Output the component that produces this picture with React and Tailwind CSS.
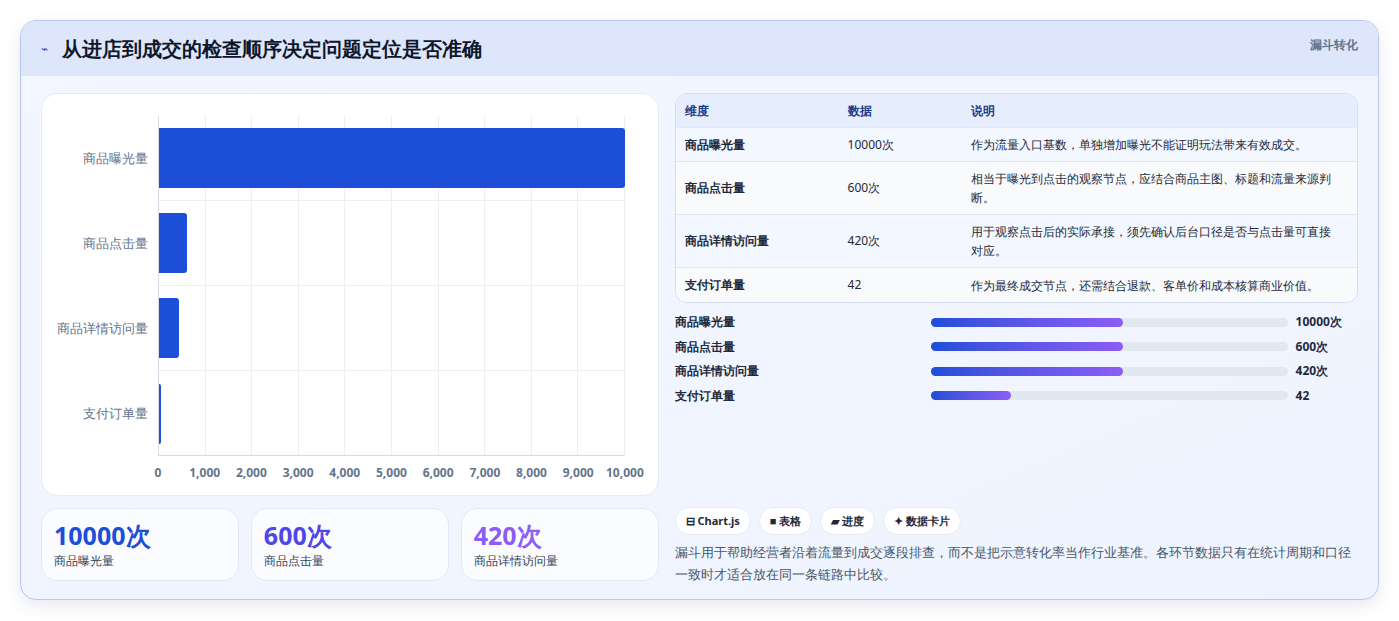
const rows = [
  { name: "商品曝光量", val: "10000次", desc: "作为流量入口基数，单独增加曝光不能证明玩法带来有效成交。", h: "h-[34px]" },
  { name: "商品点击量", val: "600次", desc: "相当于曝光到点击的观察节点，应结合商品主图、标题和流量来源判断。", h: "h-[53px]" },
  { name: "商品详情访问量", val: "420次", desc: "用于观察点击后的实际承接，须先确认后台口径是否与点击量可直接对应。", h: "h-[53px]" },
  { name: "支付订单量", val: "42", desc: "作为最终成交节点，还需结合退款、客单价和成本核算商业价值。", h: "h-[35px]" },
];

const bars = [
  { name: "商品曝光量", w: "w-[54%]", val: "10000次" },
  { name: "商品点击量", w: "w-[54%]", val: "600次" },
  { name: "商品详情访问量", w: "w-[54%]", val: "420次" },
  { name: "支付订单量", w: "w-[22.5%]", val: "42" },
];

const chart = [
  { name: "商品曝光量", w: "w-full" },
  { name: "商品点击量", w: "w-[28px]" },
  { name: "商品详情访问量", w: "w-[20px]" },
  { name: "支付订单量", w: "w-[2px]" },
];

const ticks = ["0", "1,000", "2,000", "3,000", "4,000", "5,000", "6,000", "7,000", "8,000", "9,000", "10,000"];

export default function App() {
  return (
    <div className="w-[1399px] h-[621px] bg-white p-5 font-['Noto_Sans_CJK_SC','Noto_Sans',sans-serif]">
      <div className="h-[580px] rounded-2xl border border-[#b9c6ee] overflow-hidden bg-gradient-to-br from-[#f3f6ff] to-[#eef4ff] shadow-[0_6px_16px_rgba(60,80,140,0.12)]">
        <div className="h-[55px] bg-[#dde6fb] flex items-center justify-between px-5">
          <div className="flex items-center gap-3.5">
            <span className="text-[#1d4ed8] text-xs">⌁</span>
            <h1 className="text-[20px] font-bold text-[#0f172a]">从进店到成交的检查顺序决定问题定位是否准确</h1>
          </div>
          <span className="text-xs font-bold text-[#64748b] self-start mt-4">漏斗转化</span>
        </div>
        <div className="flex gap-4 px-5 pt-[17px]">
          <div className="w-[619px] flex flex-col gap-3">
            <div className="h-[403px] bg-white rounded-2xl border border-[#e5eaf5] pt-[22px] px-3.5">
              <div className="flex">
                <div className="w-[102px] flex flex-col">
                  {chart.map((c) => (
                    <div key={c.name} className="h-[85px] flex items-center justify-end pr-2.5 text-[13px] text-[#64748b] whitespace-nowrap">{c.name}</div>
                  ))}
                </div>
                <div className="relative w-[467px] h-[340px] border-l border-b border-[#d8dce4]">
                  <div className="absolute inset-0 flex">
                    {ticks.slice(1).map((t) => (
                      <div key={t} className="flex-1 border-r border-[#eceef2]" />
                    ))}
                  </div>
                  {chart.map((c, i) => (
                    <div key={c.name} className={`relative h-[85px] flex items-center ${i < 3 ? "border-b border-[#eceef2]" : ""}`}>
                      <div className={`h-[60px] ${c.w} bg-[#1d4ed8] rounded-r-[3px]`} />
                    </div>
                  ))}
                </div>
              </div>
              <div className="ml-[102px] w-[467px] flex justify-between mt-[8px] text-[12px] font-bold text-[#64748b]">
                {ticks.map((t) => (
                  <span key={t} className="w-0 flex justify-center whitespace-nowrap">{t}</span>
                ))}
              </div>
            </div>
            <div className="grid grid-cols-3 gap-3">
              {[["10000次", "text-[#1d4ed8]", "商品曝光量"], ["600次", "text-[#4f46e5]", "商品点击量"], ["420次", "text-[#8b5cf6]", "商品详情访问量"]].map(([v, c, l]) => (
                <div key={l} className="h-[73px] bg-white/70 rounded-2xl border border-[#e2e8f5] px-3 pt-2">
                  <div className={`text-[25px] font-bold leading-[36px] ${c}`}>{v}</div>
                  <div className="text-xs text-[#334155]">{l}</div>
                </div>
              ))}
            </div>
          </div>
          <div className="w-[685px] flex flex-col">
            <div className="rounded-xl border border-[#d5ddee] overflow-hidden bg-white text-xs text-[#1e293b]">
              <div className="h-[33px] bg-[#e6eefd] flex items-center font-bold text-[#1e3a8a]">
                <span className="w-[172px] pl-[9px]">维度</span>
                <span className="w-[123px]">数据</span>
                <span>说明</span>
              </div>
              {rows.map((r, i) => (
                <div key={r.name} className={`${r.h} flex items-center border-t border-[#e3e8f2] ${i % 2 ? "bg-[#f8fafc]" : "bg-[#f3f7ff]"}`}>
                  <span className="w-[172px] pl-[9px] font-bold">{r.name}</span>
                  <span className="w-[123px]">{r.val}</span>
                  <span className="flex-1 pr-4 leading-[19px]">{r.desc}</span>
                </div>
              ))}
            </div>
            <div className="mt-[7px] flex flex-col">
              {bars.map((b) => (
                <div key={b.name} className="h-[24.5px] flex items-center text-xs font-bold text-[#1e293b]">
                  <span className="w-[256px]">{b.name}</span>
                  <div className="w-[357px] h-[9px] rounded-full bg-[#e2e8f0]">
                    <div className={`h-full ${b.w} rounded-full bg-gradient-to-r from-[#1d4ed8] to-[#8b5cf6]`} />
                  </div>
                  <span className="ml-2">{b.val}</span>
                </div>
              ))}
            </div>
            <div className="mt-[99px] flex gap-2 text-[11px] font-bold text-[#1e293b]">
              {["⊟ Chart.js", "■ 表格", "▰ 进度", "✦ 数据卡片"].map((t) => (
                <span key={t} className="h-[28px] px-2.5 rounded-full bg-white border border-[#e5eaf5] flex items-center">{t}</span>
              ))}
            </div>
            <p className="mt-1.5 text-[13px] leading-[22px] text-[#475569]">
              漏斗用于帮助经营者沿着流量到成交逐段排查，而不是把示意转化率当作行业基准。各环节数据只有在统计周期和口径一致时才适合放在同一条链路中比较。
            </p>
          </div>
        </div>
      </div>
    </div>
  );
}
